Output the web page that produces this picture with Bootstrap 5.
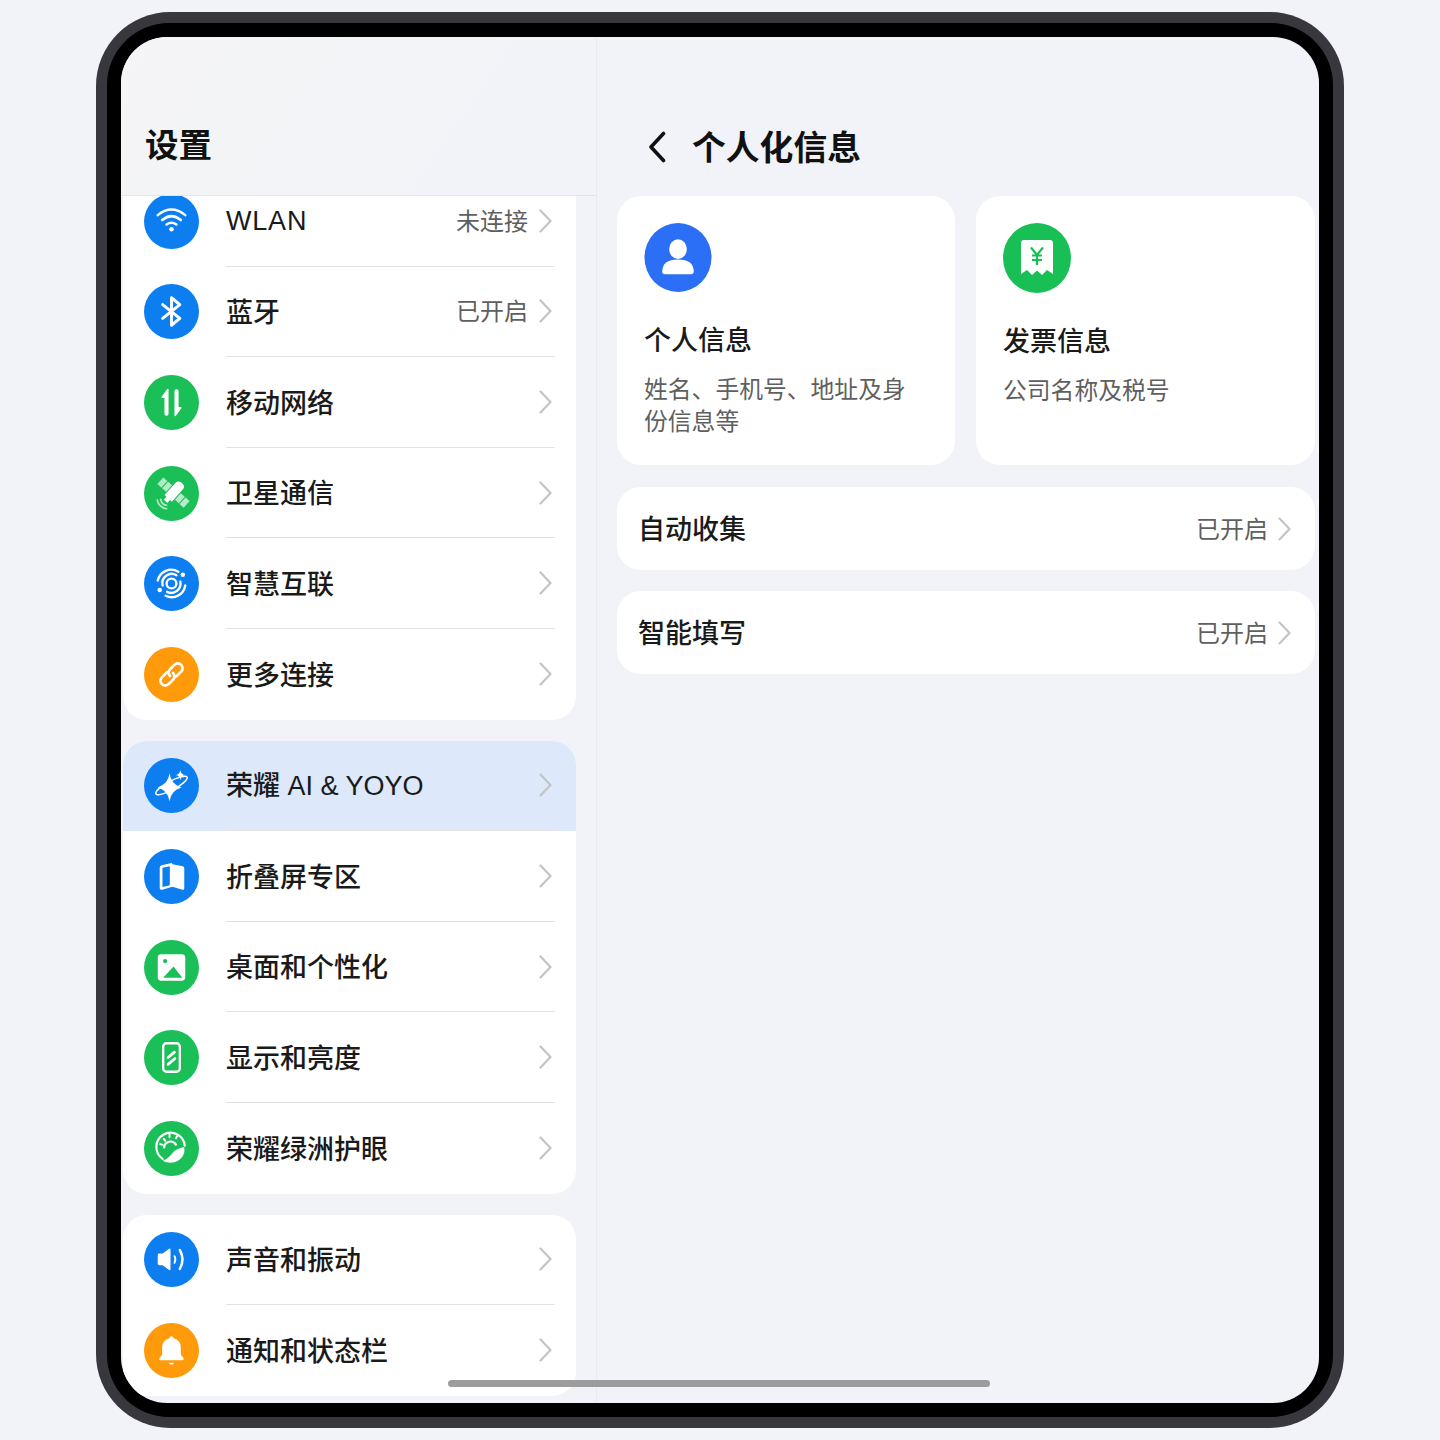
<!DOCTYPE html>
<html lang="zh-CN">
<head>
<meta charset="utf-8">
<title>个人化信息</title>
<link href="https://cdn.jsdelivr.net/npm/bootstrap@5.3.0/dist/css/bootstrap.min.css" rel="stylesheet">
<style>
body{background:#f1f3f8;font-family:"Liberation Sans","Noto Sans CJK SC",sans-serif;color:#1a1a1a;margin:0}
.device{width:1248px;height:1416px;margin:12px auto 0;padding:11px;background:#38373d;border-radius:74px}
.bezel{height:100%;padding:14px;background:#000;border-radius:62px}
.screen{height:100%;background:#f1f3f8;border-radius:46px;overflow:hidden}
.side{width:476px;flex:none;border-right:1px solid #e8eaef}
.side-head{height:159px;flex:none;padding:0 0 32px 24px;border-bottom:1px solid #e3e5ea;background:linear-gradient(125deg,#f5f5f6 0%,#f3f4f6 35%,#f1f3f8 70%)}
.side-head h1,.main-head h1{font-size:33.5px;line-height:40px;font-weight:700;margin:0;font-family:"Noto Sans CJK SC",sans-serif;color:#111}
.side-list{overflow:hidden;padding:0 20px 0 2px}
.group{background:#fff;border-radius:24px;overflow:hidden;margin-bottom:21px}
.group-first{margin-top:-20px}
.item{height:90.6px;padding-left:21px;padding-right:21px}
.item-on{background:#dde8fb}
.orb{width:55px;height:55px;flex:none;display:block;margin-right:27px}
.item-body{height:100%;border-bottom:1px solid #e2e3e7;font-size:27px;line-height:36px;font-weight:500}
.item:last-child .item-body{border-bottom:0}
.nm{padding-top:3.5px}
.latin{letter-spacing:.8px;padding-top:0}
.mix{padding-top:2px}
.val{font-size:24px;color:#5f5f5f;margin-right:11px;padding-bottom:2px;font-weight:400;font-family:"Noto Sans CJK SC",sans-serif}
.chev{width:13px;height:24px;flex:none;margin-right:3px;fill:none;stroke:#c4c4c4;stroke-width:2.2;stroke-linecap:round;stroke-linejoin:round}
.main{padding:0 4px 0 20px}
.main-head{height:159px;padding:0 0 29px 31px}
.main-head h1{font-size:33.8px;line-height:42px;margin-left:26px}
.back{width:18px;height:32px;margin-bottom:4px;fill:none;stroke:#111;stroke-width:3.6;stroke-linecap:round;stroke-linejoin:round}
.tiles{gap:21px}
.tile{flex:1 1 0;height:269px;border:0;border-radius:24px;padding:27px;background:#fff}
.tile:first-child{flex:0 0 338px}
.tile-ico{width:68px;height:70px;display:block}
.tile h2{font-size:27px;line-height:36px;font-weight:500;margin:31px 0 0}
.tile p{font-size:23.8px;line-height:32px;color:#5f5f5f;margin:15px 0 0}
.line{height:83px;background:#fff;border-radius:24px;margin-top:21px;padding:0 21px;font-size:27px;font-weight:500}
.line .val{margin-right:10px}
.tiles + .line{margin-top:22px}
.homebar{left:327px;bottom:16px;width:542px;height:7px;border-radius:4px;background:#9c9c9c}
</style>
</head>
<body>
<svg width="0" height="0" class="position-absolute"><symbol id="c" viewBox="0 0 13 24"><path d="M1.5 1.5 11.5 12 1.5 22.5"/></symbol></svg>
<div class="device"><div class="bezel"><div class="screen d-flex position-relative">

<aside class="side d-flex flex-column">
  <header class="side-head d-flex align-items-end"><h1>设置</h1></header>
  <div class="side-list flex-fill">
    <section class="group group-first">
      <div class="item d-flex align-items-center">
        <svg class="orb" viewBox="0 0 56 56"><circle cx="28" cy="28" r="28" fill="#0d7ef0"/><g fill="none" stroke="#fff" stroke-width="2.6" stroke-linecap="round"><path d="M14 21.500Q28 10 42 21.500"/><path d="M18.500 26.500Q28 18.500 37.500 26.500"/><path d="M23 31Q28 27.500 33 31"/></g><circle cx="28" cy="36" r="2.300" fill="#fff"/></svg>
        <div class="item-body flex-fill d-flex align-items-center"><span class="flex-fill nm latin">WLAN</span><span class="val">未连接</span><svg class="chev"><use href="#c"/></svg></div>
      </div>
      <div class="item d-flex align-items-center">
        <svg class="orb" viewBox="0 0 56 56"><circle cx="28" cy="28" r="28" fill="#0d7ef0"/><path d="M19 21 36.500 35 28 42V14L36.500 21 19 35" fill="none" stroke="#fff" stroke-width="3" stroke-linecap="round" stroke-linejoin="round"/></svg>
        <div class="item-body flex-fill d-flex align-items-center"><span class="flex-fill nm">蓝牙</span><span class="val">已开启</span><svg class="chev"><use href="#c"/></svg></div>
      </div>
      <div class="item d-flex align-items-center">
        <svg class="orb" viewBox="0 0 56 56"><circle cx="28" cy="28" r="28" fill="#1bbf58"/><path d="M25 15V39.500a2 2 0 0 1-4.200 0V23.500h-2.300a.8.800 0 0 1-.6-1.300l5.600-7.700a.8.800 0 0 1 1.500.5z" fill="#fff"/><path d="M31 41V16.500a2 2 0 0 1 4.200 0V32.500h2.300a.8.800 0 0 1 .6 1.300l-5.600 7.700a.8.800 0 0 1-1.500-.5z" fill="#fff"/></svg>
        <div class="item-body flex-fill d-flex align-items-center"><span class="flex-fill nm">移动网络</span><svg class="chev"><use href="#c"/></svg></div>
      </div>
      <div class="item d-flex align-items-center">
        <svg class="orb" viewBox="0 0 56 56"><circle cx="28" cy="28" r="28" fill="#1bbf58"/><g transform="translate(30 27) rotate(42)"><g fill="#b5ebc6"><rect x="-18" y="-4.500" width="12" height="9"/><rect x="6" y="-4.500" width="12" height="9"/></g><path d="M-12-4.500v9M12-4.500v9" stroke="#1bbf58" stroke-width="1"/><path d="M-5-9.500a5 3.500 0 0 1 10 0V8H2.500v4h-5V8H-5z" fill="#fff"/></g><g fill="none" stroke="#b5ebc6" stroke-width="1.700" stroke-linecap="round"><path d="M17 34a7 7 0 0 0 6 6"/><path d="M13.500 34.500a10.500 10.500 0 0 0 9.500 9"/></g></svg>
        <div class="item-body flex-fill d-flex align-items-center"><span class="flex-fill nm">卫星通信</span><svg class="chev"><use href="#c"/></svg></div>
      </div>
      <div class="item d-flex align-items-center">
        <svg class="orb" viewBox="0 0 56 56"><circle cx="28" cy="28" r="28" fill="#0d7ef0"/><g fill="none" stroke="#fff" stroke-width="2.400" stroke-linecap="round"><circle cx="28" cy="28" r="5"/><path d="M19 30a9.500 9.500 0 0 1 14-10.500"/><path d="M37 26a9.500 9.500 0 0 1-13.500 10.500"/><path d="M14 25a14 14 0 0 1 21-9"/><path d="M42 30a14 14 0 0 1-20 10.500"/></g><circle cx="39.500" cy="19" r="2.300" fill="#fff"/><circle cx="16" cy="34.500" r="2.300" fill="#fff"/></svg>
        <div class="item-body flex-fill d-flex align-items-center"><span class="flex-fill nm">智慧互联</span><svg class="chev"><use href="#c"/></svg></div>
      </div>
      <div class="item d-flex align-items-center">
        <svg class="orb" viewBox="0 0 56 56"><circle cx="28" cy="28" r="28" fill="#ff9a0a"/><g transform="translate(28 28) rotate(-45) scale(.9)" fill="none" stroke="#fff" stroke-width="3.100" stroke-linecap="round"><path d="M-2-5.400H-10a5.400 5.400 0 0 0 0 10.800H-3a5.400 5.400 0 0 0 5.400-5.400"/><path d="M2 5.400H10a5.400 5.400 0 0 0 0-10.800H3a5.400 5.400 0 0 0-5.400 5.400"/></g></svg>
        <div class="item-body flex-fill d-flex align-items-center"><span class="flex-fill nm">更多连接</span><svg class="chev"><use href="#c"/></svg></div>
      </div>
    </section>

    <section class="group">
      <div class="item item-on d-flex align-items-center">
        <svg class="orb" viewBox="0 0 56 56"><circle cx="28" cy="28" r="28" fill="#0d7ef0"/><ellipse cx="28" cy="28" rx="18" ry="4.500" transform="rotate(-28 28 28)" fill="none" stroke="#fff" stroke-width="1.500"/><path d="M26 15.500Q27.500 27 38 30 27.500 33 26 44 24.500 33 14 30 24.500 27 26 15.500z" fill="#fff"/><path d="M37 12.500Q37.700 16.500 41.500 17.300 37.700 18.100 37 22.500 36.300 18.100 32.500 17.300 36.300 16.500 37 12.500z" fill="#fff"/></svg>
        <div class="item-body flex-fill d-flex align-items-center"><span class="flex-fill mix">荣耀 AI &amp; YOYO</span><svg class="chev"><use href="#c"/></svg></div>
      </div>
      <div class="item d-flex align-items-center">
        <svg class="orb" viewBox="0 0 56 56"><circle cx="28" cy="28" r="28" fill="#0d7ef0"/><path d="M29 15.500 39.500 17.500a2 2 0 0 1 1.500 2V40a1.500 1.500 0 0 1-2 1.400L29 38.500 18.500 41.500a2 2 0 0 1-2.500-2V19a2.500 2.500 0 0 1 2-2.400L27 14.500a1.500 1.500 0 0 1 2 1z" fill="#fff"/><path d="M18.800 19.200 26.300 17.600V36.800L18.800 38.700z" fill="#0d7ef0"/></svg>
        <div class="item-body flex-fill d-flex align-items-center"><span class="flex-fill nm">折叠屏专区</span><svg class="chev"><use href="#c"/></svg></div>
      </div>
      <div class="item d-flex align-items-center">
        <svg class="orb" viewBox="0 0 56 56"><circle cx="28" cy="28" r="28" fill="#1bbf58"/><rect x="14" y="14.500" width="28" height="27" rx="3.500" fill="#fff"/><circle cx="21.500" cy="21.500" r="2.200" fill="#1bbf58"/><path d="M19.500 38.500 30 27 39 38.500z" fill="#1bbf58"/></svg>
        <div class="item-body flex-fill d-flex align-items-center"><span class="flex-fill nm">桌面和个性化</span><svg class="chev"><use href="#c"/></svg></div>
      </div>
      <div class="item d-flex align-items-center">
        <svg class="orb" viewBox="0 0 56 56"><circle cx="28" cy="28" r="28" fill="#1bbf58"/><rect x="19.500" y="13.500" width="17" height="29" rx="3.500" fill="none" stroke="#fff" stroke-width="2.400"/><path d="M24.500 28 31 22.500M24.500 35 31.500 29" stroke="#fff" stroke-width="2.800" stroke-linecap="round"/></svg>
        <div class="item-body flex-fill d-flex align-items-center"><span class="flex-fill nm">显示和亮度</span><svg class="chev"><use href="#c"/></svg></div>
      </div>
      <div class="item d-flex align-items-center">
        <svg class="orb" viewBox="0 0 56 56"><circle cx="28" cy="28" r="28" fill="#1bbf58"/><path d="M19 38.500A14.500 14.500 0 1 1 41.500 25" fill="none" stroke="#fff" stroke-width="2.200" stroke-linecap="round"/><path d="M20.500 27a6.500 6.500 0 0 1 12-3" fill="none" stroke="#fff" stroke-width="2.200" stroke-linecap="round"/><path d="M19 40.500Q25 38 29 32.500 33 28 41 26.500 42 31 39.500 36 35 42.500 27 42.500 22 42.500 19 40.500z" fill="#fff"/><path d="M26 13.500v3M34 15l-1.500 2.500M20 18l1.500 2M16.500 23.500l2.500.8" stroke="#fff" stroke-width="2" stroke-linecap="round"/></svg>
        <div class="item-body flex-fill d-flex align-items-center"><span class="flex-fill nm">荣耀绿洲护眼</span><svg class="chev"><use href="#c"/></svg></div>
      </div>
    </section>

    <section class="group">
      <div class="item d-flex align-items-center">
        <svg class="orb" viewBox="0 0 56 56"><circle cx="28" cy="28" r="28" fill="#0d7ef0"/><path d="M14 23.500a1.500 1.500 0 0 1 1.500-1.500h3.500l6.500-5a1 1 0 0 1 1.500.8V38a1 1 0 0 1-1.500.8l-6.500-5h-3.500a1.500 1.500 0 0 1-1.500-1.500z" fill="#fff"/><path d="M31 24.500a7 7 0 0 1 0 7" fill="none" stroke="#fff" stroke-linecap="round" stroke-width="1.800"/><path d="M36.500 18.500Q42 28 36.500 37.500" fill="none" stroke="#fff" stroke-width="2.600" stroke-linecap="round"/></svg>
        <div class="item-body flex-fill d-flex align-items-center"><span class="flex-fill nm">声音和振动</span><svg class="chev"><use href="#c"/></svg></div>
      </div>
      <div class="item d-flex align-items-center">
        <svg class="orb" viewBox="0 0 56 56"><circle cx="28" cy="28" r="28" fill="#ff9a0a"/><path d="M28 13.500q1.800 0 2.200 2 7.300 2 7.300 10v6.500l2.800 4a1.200 1.200 0 0 1-1 1.900H16.700a1.200 1.200 0 0 1-1-1.900l2.800-4v-6.500q0-8 7.300-10 .4-2 2.200-2z" fill="#fff"/><path d="M25.500 40.500h5a2.500 2 0 0 1-5 0z" fill="#fff"/></svg>
        <div class="item-body flex-fill d-flex align-items-center"><span class="flex-fill nm">通知和状态栏</span><svg class="chev"><use href="#c"/></svg></div>
      </div>
    </section>
  </div>
</aside>

<main class="main flex-fill">
  <header class="main-head d-flex align-items-end">
    <svg class="back" viewBox="0 0 18 32"><path d="M15.500 2.500 3 16 15.500 29.500"/></svg>
    <h1>个人化信息</h1>
  </header>
  <div class="tiles d-flex">
    <article class="tile card">
      <svg class="tile-ico" viewBox="0 0 68 70"><ellipse cx="34" cy="35" rx="34" ry="35" fill="#2b6ff6"/><ellipse cx="34" cy="26.500" rx="9" ry="10" fill="#fff"/><path d="M18 49.500q0-12.500 16-12.500t16 12.500q0 2.500-3 2.500H21q-3 0-3-2.500z" fill="#fff"/></svg>
      <h2>个人信息</h2>
      <p>姓名、手机号、地址及身份信息等</p>
    </article>
    <article class="tile card">
      <svg class="tile-ico" viewBox="0 0 68 70"><ellipse cx="34" cy="35" rx="34" ry="35" fill="#17bf55"/><path d="M18 20a3 3 0 0 1 3-3H47a3 3 0 0 1 3 3V51L44 47 39 52 34 47.500 29 52 24 47 18 51z" fill="#fff"/><path d="M28 24.500 34 32 40 24.500M34 32V42M29 32.500H39M29 37H39" fill="none" stroke="#17bf55" stroke-width="2.200"/></svg>
      <h2>发票信息</h2>
      <p>公司名称及税号</p>
    </article>
  </div>
  <div class="line d-flex align-items-center"><span class="flex-fill nm">自动收集</span><span class="val">已开启</span><svg class="chev"><use href="#c"/></svg></div>
  <div class="line d-flex align-items-center"><span class="flex-fill nm">智能填写</span><span class="val">已开启</span><svg class="chev"><use href="#c"/></svg></div>
</main>

<div class="homebar position-absolute"></div>
</div></div></div>
<script src="https://cdn.jsdelivr.net/npm/bootstrap@5.3.0/dist/js/bootstrap.bundle.min.js"></script>
</body>
</html>
